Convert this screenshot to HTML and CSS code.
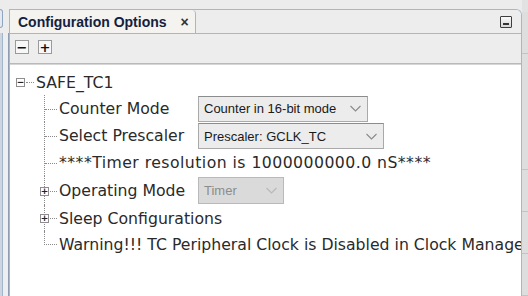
FILE: index.html
```html
<!DOCTYPE html>
<html lang="en">
  <head>
    <meta charset="UTF-8" />
    <title>Configuration Options</title>
    <link rel="stylesheet" href="styles.css">
  </head>
  <body>
    <div class="shell">
      <div class="side-left">
        <div class="side-left-tab"></div>
        <div class="side-left-body"></div>
      </div>

      <div class="panel">
        <div class="tabbar">
          <div class="tab">
            <span class="tab-title">Configuration Options</span>
            <span class="tab-close">&times;</span>
          </div>
          <div class="tabbar-fill">
            <span class="min-btn"><span class="min-bar"></span></span>
          </div>
        </div>

        <div class="toolbar">
          <span class="tool-btn">&minus;</span>
          <span class="tool-btn">+</span>
        </div>

        <div class="content">
          <div class="tree">
            <div class="root-row">
              <span class="expander">&minus;</span>
              <span class="root-link"></span>
              <span class="label">SAFE_TC1</span>
            </div>
            <ul class="children">
              <li class="node">
                <span class="label name">Counter Mode</span>
                <span class="combo combo-counter">
                  <span class="combo-text">Counter in 16-bit mode</span>
                  <svg class="chev" width="11" height="7" viewBox="0 0 11 7"><path d="M0.5 1 L5.5 6 L10.5 1" fill="none" stroke="#8a8a8a" stroke-width="1.1"/></svg>
                </span>
              </li>
              <li class="node">
                <span class="label name">Select Prescaler</span>
                <span class="combo combo-prescaler">
                  <span class="combo-text">Prescaler: GCLK_TC</span>
                  <svg class="chev" width="11" height="7" viewBox="0 0 11 7"><path d="M0.5 1 L5.5 6 L10.5 1" fill="none" stroke="#8a8a8a" stroke-width="1.1"/></svg>
                </span>
              </li>
              <li class="node">
                <span class="label spaced">****Timer resolution is 1000000000.0 nS****</span>
              </li>
              <li class="node node-tall">
                <span class="expander small">+</span>
                <span class="label name">Operating Mode</span>
                <span class="combo combo-timer disabled">
                  <span class="combo-text">Timer</span>
                  <svg class="chev" width="11" height="7" viewBox="0 0 11 7"><path d="M0.5 1 L5.5 6 L10.5 1" fill="none" stroke="#b8b8b8" stroke-width="1.1"/></svg>
                </span>
              </li>
              <li class="node node-short">
                <span class="expander small">+</span>
                <span class="label">Sleep Configurations</span>
              </li>
              <li class="node last">
                <span class="label">Warning!!! TC Peripheral Clock is Disabled in Clock Manager</span>
              </li>
            </ul>
          </div>
        </div>
      </div>

      <div class="side-right">
        <div class="side-right-cell"></div>
        <div class="side-right-cell grow"></div>
        <div class="side-right-cell"></div>
        <div class="side-right-cell"></div>
        <div class="side-right-cell"></div>
      </div>
    </div>
  </body>
</html>
```

FILE: styles.css
```css
/* General styles */
body {
  margin: 0;
  width: 528px;
  height: 296px;
  overflow: hidden;
  background-color: #ececec;
  font-family: "DejaVu Sans", sans-serif;
  color: #2a2a2a;
}

.shell {
  display: flex;
  height: 296px;
}

/* Neighbour panels */
.side-left {
  width: 9px;
  flex-shrink: 0;
  display: flex;
  flex-direction: column;
  padding-top: 9px;
}

.side-left-tab {
  width: 3px;
  height: 19px;
  border: 1px solid #8fa6c2;
  border-left: none;
  border-radius: 0 3px 3px 0;
  background-color: #e4e9ef;
  box-sizing: border-box;
}

.side-left-body {
  flex: 1;
  margin-top: 5px;
  background: linear-gradient(to right, #cdd6e0 0 2px, #a3b5ca 2px 3px, #eceef0 3px 8px, #8e9db1 8px 9px);
}

.side-right {
  width: 6px;
  flex-shrink: 0;
  display: flex;
  flex-direction: column;
  padding-top: 12px;
  background-color: #e2e2e2;
}

.side-right-cell {
  height: 51px;
  border-bottom: 1px solid #c4c4c4;
  background-color: #dedede;
}

.side-right-cell.grow {
  height: 142px;
}

/* Main panel */
.panel {
  flex: 1;
  min-width: 0;
  display: flex;
  flex-direction: column;
  margin-top: 9px;
  border: 1px solid #a6b7cc;
  border-bottom: none;
  border-radius: 0 6px 0 0;
  overflow: hidden;
}

.tabbar {
  display: flex;
  height: 23px;
  border-bottom: 1px solid #a6b7cc;
  background-color: #ededed;
}

.tab {
  width: 186px;
  display: flex;
  align-items: center;
  padding-left: 8px;
  box-sizing: border-box;
  background-color: #f4f3f0;
  border-right: 1px solid #a6b7cc;
  border-radius: 0 4px 0 0;
}

.tab-title {
  font-family: "Liberation Sans", sans-serif;
  font-weight: bold;
  font-size: 14px;
  color: #13213f;
}

.tab-close {
  margin-left: 14px;
  font-family: "Liberation Sans", sans-serif;
  font-weight: bold;
  font-size: 14px;
  color: #333;
}

.tabbar-fill {
  flex: 1;
  display: flex;
  justify-content: flex-end;
  align-items: center;
  padding-right: 9px;
}

.min-btn {
  width: 12px;
  height: 12px;
  border: 1px solid #3e3e3e;
  border-radius: 1px;
  background: linear-gradient(#fafafa, #d6d6d6);
  box-sizing: border-box;
  display: flex;
  justify-content: center;
  align-items: flex-end;
  padding-bottom: 2px;
}

.min-bar {
  width: 6px;
  height: 2px;
  background-color: #333;
}

/* Toolbar */
.toolbar {
  height: 30px;
  display: flex;
  align-items: center;
  gap: 9px;
  padding: 0 0 3px 5px;
  box-sizing: border-box;
  border-bottom: 1px solid #b9b9b9;
  background-color: #ededed;
}

.tool-btn {
  width: 14px;
  height: 14px;
  box-sizing: border-box;
  border: 1px solid #9a9a9a;
  background-color: #f7f7f7;
  display: flex;
  justify-content: center;
  align-items: center;
  font-family: "DejaVu Sans", sans-serif;
  font-weight: bold;
  font-size: 13px;
  line-height: 1;
  color: #111;
}

/* Tree */
.content {
  flex: 1;
  background-color: #fff;
  border-top: 1px solid #d6d6d6;
}

.tree {
  padding-top: 4px;
  font-size: 15.7px;
}

.root-row {
  height: 26px;
  display: flex;
  align-items: center;
  padding-left: 6px;
}

.expander {
  width: 9px;
  height: 9px;
  box-sizing: border-box;
  border: 1px solid #8e8e8e;
  background-color: #fff;
  display: flex;
  justify-content: center;
  align-items: center;
  font-size: 9px;
  line-height: 1;
  font-weight: bold;
  color: #222;
}

.root-link {
  width: 8px;
  margin: 0 2px 0 1px;
  border-top: 1px dotted #8a8a8a;
}

.label {
  white-space: nowrap;
}

.label.spaced {
  letter-spacing: 0.45px;
}

.children {
  list-style: none;
  margin: 0 0 0 34px;
  padding: 0;
}

.node {
  position: relative;
  height: 27px;
  display: flex;
  align-items: center;
  padding-left: 14px;
  border-left: 1px dotted #8a8a8a;
}

.node::before {
  content: "";
  position: absolute;
  left: 0;
  top: 50%;
  width: 12px;
  border-top: 1px dotted #8a8a8a;
}

.node.node-tall {
  height: 29px;
}

.node.node-short {
  height: 26px;
}

.node.last {
  border-left: none;
  padding-left: 15px;
}

.node.last::before {
  height: 13px;
  top: 0;
  border-left: 1px dotted #8a8a8a;
  border-top: none;
  border-bottom: 1px dotted #8a8a8a;
}

.expander.small {
  position: absolute;
  left: -5px;
  top: 50%;
  margin-top: -4px;
  z-index: 1;
}

.name {
  width: 139px;
}

/* Combo boxes */
.combo {
  height: 26px;
  box-sizing: border-box;
  display: flex;
  align-items: center;
  justify-content: space-between;
  padding: 0 6px 0 5px;
  border: 1px solid #a9a9a9;
  border-top-color: #8c8c8c;
  background-color: #ececec;
  font-family: "Liberation Sans", sans-serif;
  font-size: 13px;
  color: #1a1a1a;
}

.combo-counter {
  width: 170px;
}

.combo-prescaler {
  width: 186px;
  margin-top: 1px;
}

.combo-timer {
  width: 86px;
  height: 27px;
}

.combo.disabled {
  background-color: #dadada;
  border-color: #b9b9b9;
  color: #8c8c8c;
}
```
